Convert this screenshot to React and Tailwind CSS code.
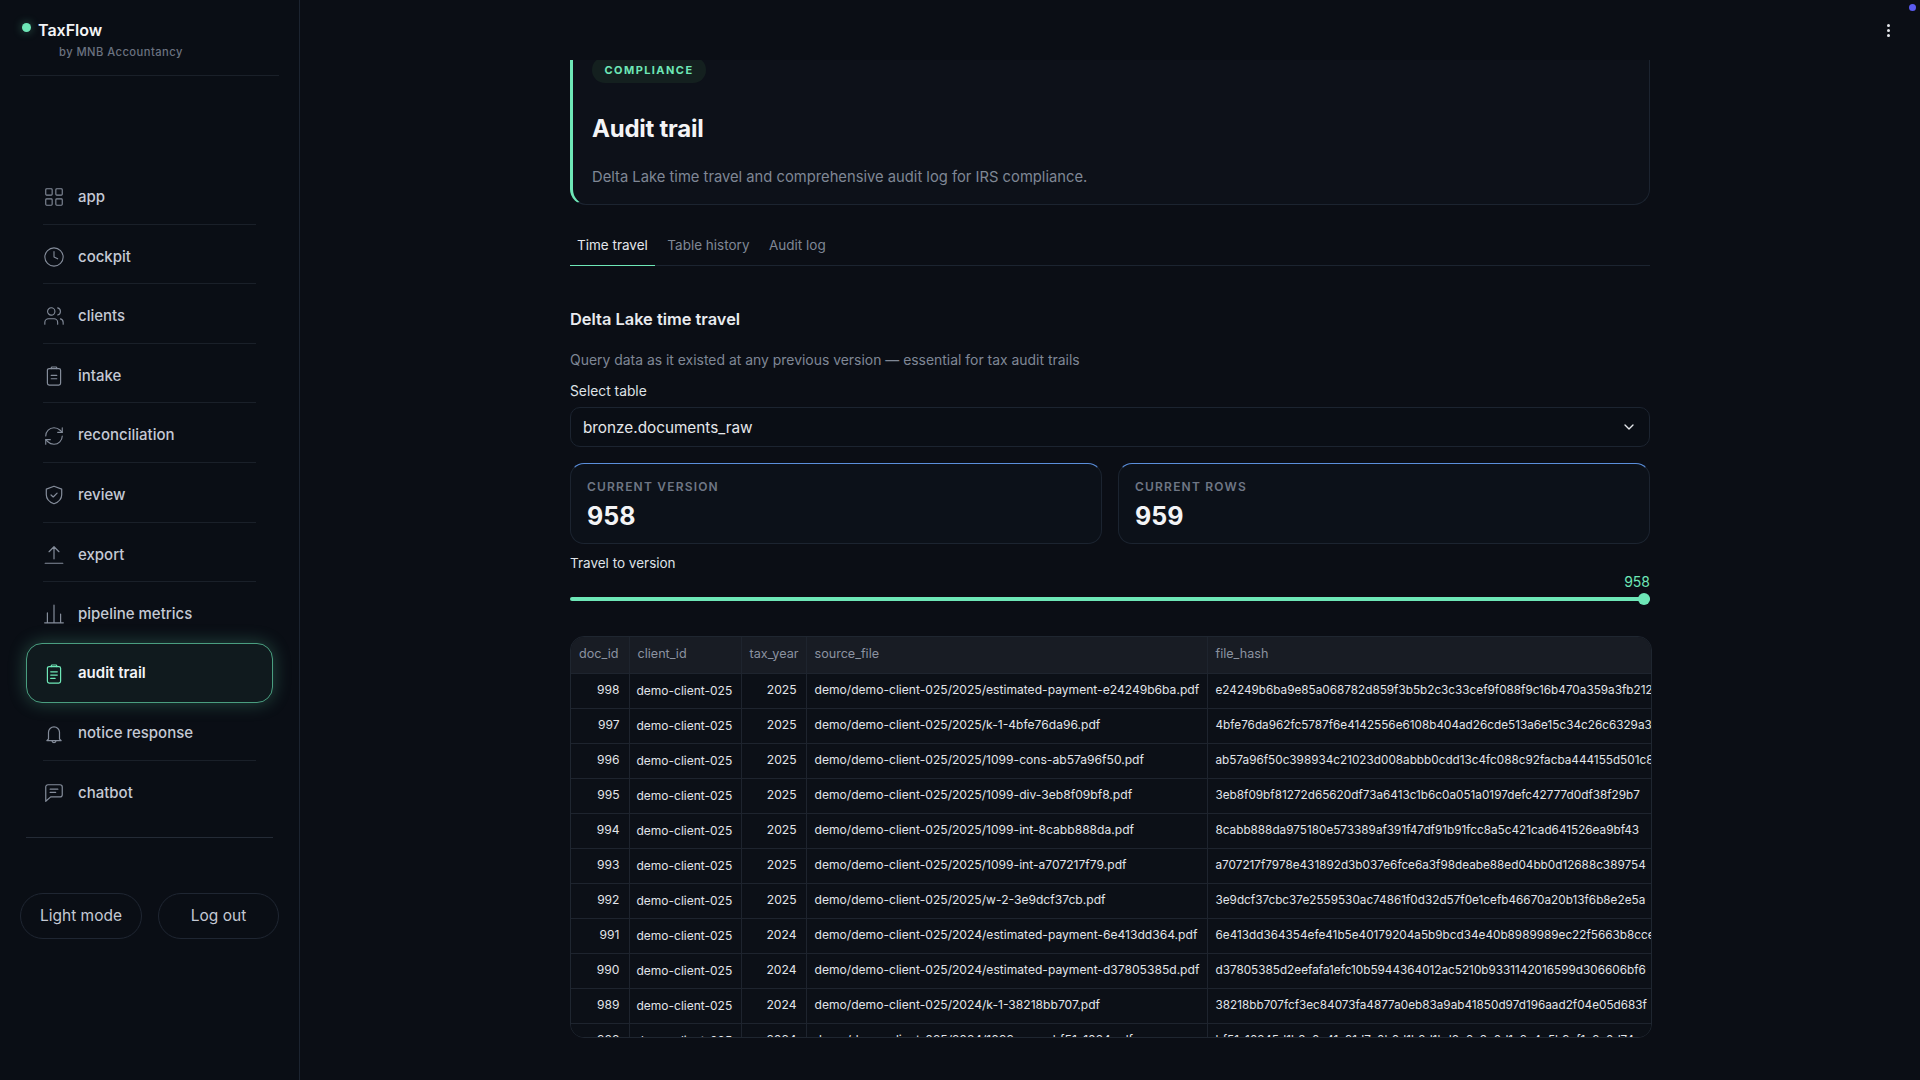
import React from "react";
import { LayoutGrid, Clock, Users, RefreshCw, ChevronDown } from "lucide-react";

const ClipLines = ({ className, lines = 2 }) => (
  <svg className={className} viewBox="0 0 20 20" fill="none" stroke="currentColor" strokeWidth="1.1" strokeLinecap="round" strokeLinejoin="round">
    <rect x="4" y="3.2" width="12" height="15" rx="1.6" />
    <path d="M7.5 3.200V2.600a.8.8 0 0 1 .8-.8h3.400a.8.8 0 0 1 .8.8v.6" />
    {lines === 2 ? <path d="M7.500 9.500h5M7.500 12.500h5" /> : <path d="M7 8h6M7 11h6M7 14h4" />}
  </svg>
);
const ShieldIcon = ({ className }) => (
  <svg className={className} viewBox="0 0 20 20" fill="none" stroke="currentColor" strokeWidth="1.1" strokeLinecap="round" strokeLinejoin="round">
    <path d="M10 2 17 4.600v5.200c0 4-2.900 6.700-7 8.200-4.100-1.500-7-4.200-7-8.200V4.600z" />
    <path d="m7.300 10 2 1.800 3.500-3.500" />
  </svg>
);
const ExportIcon = ({ className }) => (
  <svg className={className} viewBox="0 0 20 20" fill="none" stroke="currentColor" strokeWidth="1.1" strokeLinecap="round" strokeLinejoin="round">
    <path d="M10 13.500V2.500M5.500 7 10 2.500 14.500 7M2 17.500h16" />
  </svg>
);
const BarsIcon = ({ className }) => (
  <svg className={className} viewBox="0 0 20 20" fill="none" stroke="currentColor" strokeWidth="1.1" strokeLinecap="round">
    <path d="M1.500 18h17M4 18V9M10 18V2M16 18V10" />
  </svg>
);
const BellIcon = ({ className }) => (
  <svg className={className} viewBox="0 0 20 20" fill="none" stroke="currentColor" strokeWidth="1.1" strokeLinecap="round" strokeLinejoin="round">
    <path d="M5 14.500V8.500a5 5 0 0 1 10 0v6l1.500 1.500h-13zM8.200 16.500a1.900 1.900 0 0 0 3.600 0" />
  </svg>
);
const ChatIcon = ({ className }) => (
  <svg className={className} viewBox="0 0 20 20" fill="none" stroke="currentColor" strokeWidth="1.1" strokeLinecap="round" strokeLinejoin="round">
    <path d="M2.500 4.500a2 2 0 0 1 2-2h11a2 2 0 0 1 2 2v7a2 2 0 0 1-2 2H7l-4.500 4z" />
    <path d="M6.500 6.500h7M6.500 9.500h5" />
  </svg>
);

const navItems = [
  { label: "app", icon: <LayoutGrid className="w-[22px] h-[22px]" strokeWidth={1.2} /> },
  { label: "cockpit", icon: <Clock className="w-[22px] h-[22px]" strokeWidth={1.2} /> },
  { label: "clients", icon: <Users className="w-[22px] h-[22px]" strokeWidth={1.2} /> },
  { label: "intake", icon: <ClipLines className="w-[22px] h-[22px]" /> },
  { label: "reconciliation", icon: <RefreshCw className="w-[22px] h-[22px]" strokeWidth={1.2} /> },
  { label: "review", icon: <ShieldIcon className="w-[22px] h-[22px]" /> },
  { label: "export", icon: <ExportIcon className="w-[22px] h-[22px]" /> },
  { label: "pipeline metrics", icon: <BarsIcon className="w-[22px] h-[22px]" />, noLine: true },
  { label: "audit trail", icon: <ClipLines className="w-[22px] h-[22px]" lines={3} />, active: true, noLine: true },
  { label: "notice response", icon: <BellIcon className="w-[22px] h-[22px]" /> },
  { label: "chatbot", icon: <ChatIcon className="w-[22px] h-[22px]" />, noLine: true },
];

const rows = [
  ["998", "2025", "demo/demo-client-025/2025/estimated-payment-e24249b6ba.pdf", "e24249b6ba9e85a068782d859f3b5b2c3c33cef9f088f9c16b470a359a3fb212"],
  ["997", "2025", "demo/demo-client-025/2025/k-1-4bfe76da96.pdf", "4bfe76da962fc5787f6e4142556e6108b404ad26cde513a6e15c34c26c6329a3"],
  ["996", "2025", "demo/demo-client-025/2025/1099-cons-ab57a96f50.pdf", "ab57a96f50c398934c21023d008abbb0cdd13c4fc088c92facba444155d501c8"],
  ["995", "2025", "demo/demo-client-025/2025/1099-div-3eb8f09bf8.pdf", "3eb8f09bf81272d65620df73a6413c1b6c0a051a0197defc42777d0df38f29b7"],
  ["994", "2025", "demo/demo-client-025/2025/1099-int-8cabb888da.pdf", "8cabb888da975180e573389af391f47df91b91fcc8a5c421cad641526ea9bf43"],
  ["993", "2025", "demo/demo-client-025/2025/1099-int-a707217f79.pdf", "a707217f7978e431892d3b037e6fce6a3f98deabe88ed04bb0d12688c389754"],
  ["992", "2025", "demo/demo-client-025/2025/w-2-3e9dcf37cb.pdf", "3e9dcf37cbc37e2559530ac74861f0d32d57f0e1cefb46670a20b13f6b8e2e5a"],
  ["991", "2024", "demo/demo-client-025/2024/estimated-payment-6e413dd364.pdf", "6e413dd364354efe41b5e40179204a5b9bcd34e40b8989989ec22f5663b8cce1"],
  ["990", "2024", "demo/demo-client-025/2024/estimated-payment-d37805385d.pdf", "d37805385d2eefafa1efc10b5944364012ac5210b9331142016599d306606bf6"],
  ["989", "2024", "demo/demo-client-025/2024/k-1-38218bb707.pdf", "38218bb707fcf3ec84073fa4877a0eb83a9ab41850d97d196aad2f04e05d683f"],
  ["988", "2024", "demo/demo-client-025/2024/1099-cons-bf51a1024.pdf", "bf51a10245d1b3a0c41a91d7e0b0d1b2d1bd8a6c3e0d1a2a4e5b9cf1e2a0d74c"],
];

function Sidebar() {
  return (
    <aside className="w-[300px] shrink-0 h-full border-r border-[#1c2430] bg-[#0a0e15] flex flex-col">
      <div className="mx-5 h-[76px] border-b border-[#1a2029] pt-[21px]">
        <div className="flex items-start">
          <span className="w-[9px] h-[9px] rounded-full bg-[#6ee7b7] shadow-[0_0_10px_#6ee7b766] mt-[2px] ml-[2px]"></span>
          <span className="ml-[7px] text-[16px] leading-[19px] font-semibold text-[#f3f4f6]">TaxFlow</span>
        </div>
        <div className="ml-[39px] mt-[5px] text-[11.2px] leading-[14px] font-medium tracking-[0.04em] text-[#6b7280]">by MNB Accountancy</div>
      </div>
      <nav className="mt-[89px] flex flex-col">
        {navItems.map((item) => (
          <div
            key={item.label}
            className={
              item.active
                ? "mx-[26px] mt-[1.500px] -mb-[1.500px] h-[59.600px] px-[16px] flex items-center rounded-2xl border border-[#4a9e80] bg-[#101a1e] shadow-[0_0_18px_#6ee7b744]"
                : "mx-[26px] h-[59.600px] px-[17px]"
            }
          >
            <div className={`h-full flex items-center ${item.active ? "w-full pt-[1px]" : "pt-[6px] border-b"} ${item.noLine ? "border-transparent" : "border-[#1a2029]"}`}>
              <span className={item.active ? "w-[35px] flex text-[#6ee7b7]" : "w-[35px] flex text-[#848c9a]"}>{item.icon}</span>
              <span className={item.active ? "text-[15px] font-semibold text-[#f3f4f6]" : "text-[15px] font-medium text-[#c4c9d4]"}>{item.label}</span>
            </div>
          </div>
        ))}
      </nav>
      <div className="mx-[26px] mt-[16px] border-t border-[#242b36]"></div>
      <div className="mx-5 mt-[55px] flex gap-4">
        <button className="w-[122px] h-[46px] rounded-full border border-[#1f2632] text-[15.500px] text-[#c4c9d4]">Light mode</button>
        <button className="w-[121px] h-[46px] rounded-full border border-[#1f2632] text-[15.500px] text-[#c4c9d4]">Log out</button>
      </div>
    </aside>
  );
}

function MetricCard({ label, value }) {
  return (
    <div className="flex-1 h-[81px] rounded-[14px] border border-[#1c2430] border-t-[#5b8fdc] bg-[#0c1119] px-[16px] pt-[15px]">
      <div className="text-[12px] leading-[16px] font-semibold tracking-[0.1em] text-[#6f7785] uppercase">{label}</div>
      <div className="mt-[4px] text-[25px] leading-[34px] font-bold text-[#f3f4f6]">{value}</div>
    </div>
  );
}

function DataTable() {
  const cell = "border-r border-b border-[#1e242e] whitespace-nowrap overflow-hidden";
  return (
    <div className="mt-[35px] w-[1082px] h-[402px] rounded-[14px] border border-[#1f2630] overflow-hidden">
      <table className="table-fixed w-[1240px] border-collapse text-[12.100px] text-[#e2e5ea]">
        <colgroup>
          <col className="w-[58px]" />
          <col className="w-[112px]" />
          <col className="w-[65px]" />
          <col className="w-[401px]" />
          <col className="w-[604px]" />
        </colgroup>
        <thead>
          <tr className="h-[36px] bg-[#181c24] text-[#8b92a0] text-left">
            {["doc_id", "client_id", "tax_year", "source_file", "file_hash"].map((h) => (
              <th key={h} className={`${cell} px-[8px] font-normal text-[12.600px]`}>{h}</th>
            ))}
          </tr>
        </thead>
        <tbody className="bg-[#0c1017]">
          {rows.map((r) => (
            <tr key={r[0]} className="h-[35px]">
              <td className={`${cell} pr-[9px] text-right`}>{r[0]}</td>
              <td className={`${cell} pl-[7px] text-[12px]`}>demo-client-025</td>
              <td className={`${cell} pr-[9px] text-right`}>{r[1]}</td>
              <td className={`${cell} pl-[8px]`}>{r[2]}</td>
              <td className={`${cell} pl-[8px] text-[11.750px]`}>{r[3]}</td>
            </tr>
          ))}
        </tbody>
      </table>
    </div>
  );
}

export default function App() {
  return (
    <div className="w-[1920px] h-[1080px] flex overflow-hidden bg-[#0b0e15] font-['Inter',sans-serif]">
      <Sidebar />
      <main className="flex-1 h-full flex flex-col min-w-0 relative">
        <span className="absolute right-[4px] top-[4px] w-[7px] h-[7px] rounded-full bg-[#5b5bf0]"></span>
        <header className="h-[60px] shrink-0 flex items-start justify-end pr-[30px] pt-[24px]">
          <div className="flex flex-col gap-[2px]">
            <span className="w-[3px] h-[3px] rounded-full bg-[#e5e7eb]"></span>
            <span className="w-[3px] h-[3px] rounded-full bg-[#e5e7eb]"></span>
            <span className="w-[3px] h-[3px] rounded-full bg-[#e5e7eb]"></span>
          </div>
        </header>
        <div className="flex-1 overflow-hidden pl-[270px] w-[1620px]">
          <div className="w-[1080px]">
            <section className="-mt-[20px] h-[165px] rounded-b-2xl border border-t-0 border-[#1c2430] border-l-[3px] border-l-[#6ee7b7] bg-[#0d1119] pl-[19px]">
              <span className="mt-[17px] inline-flex h-[26px] w-[114px] items-center justify-center rounded-full bg-[#14201f] text-[11px] font-bold tracking-[0.13em] text-[#6ee7b7]">COMPLIANCE</span>
              <h1 className="mt-[30px] text-[24px] leading-[32px] font-bold tracking-[-0.01em] text-[#f3f4f6]">Audit trail</h1>
              <p className="mt-[21px] text-[14.750px] leading-[22px] text-[#7f8795]">Delta Lake time travel and comprehensive audit log for IRS compliance.</p>
            </section>
            <div className="mt-[21px] h-[40px] flex items-end gap-[5.500px] border-b border-[#1c2430] text-[13.500px]">
              <div className="-mb-px h-[40px] px-[7px] pb-[1px] flex items-center border-b border-[#6ee7b7] text-[#e5e7eb]">Time travel</div>
              <div className="h-[40px] px-[7px] flex items-center text-[#7f8795]">Table history</div>
              <div className="h-[40px] px-[7px] flex items-center text-[#7f8795]">Audit log</div>
            </div>
            <h2 className="mt-[41px] text-[16.400px] leading-[24px] font-semibold text-[#e9ebef]">Delta Lake time travel</h2>
            <p className="mt-[19px] text-[13.930px] leading-[20px] text-[#7f8795]">Query data as it existed at any previous version — essential for tax audit trails</p>
            <label className="block mt-[11px] text-[13.800px] leading-[20px] text-[#dfe2e7]">Select table</label>
            <div className="mt-[6px] h-[40px] rounded-[10px] border border-[#1c2430] bg-[#0a0e15] px-[12px] flex items-center justify-between text-[15.300px] text-[#e5e7eb]">
              <span className="pt-[2px]">bronze.documents_raw</span>
              <ChevronDown className="w-4 h-4 text-[#e5e7eb]" strokeWidth={2} />
            </div>
            <div className="mt-[16px] flex gap-[16px]">
              <MetricCard label="Current version" value="958" />
              <MetricCard label="Current rows" value="959" />
            </div>
            <label className="block mt-[9px] text-[13.500px] leading-[20px] text-[#dfe2e7]">Travel to version</label>
            <div className="text-right text-[14px] leading-[18px] text-[#6ee7b7]">958</div>
            <div className="relative mt-[6px] h-[4px] rounded-full bg-[#6ee7b7]">
              <span className="absolute right-0 -top-[4px] w-[12px] h-[12px] rounded-full bg-[#6ee7b7]"></span>
            </div>
            <DataTable />
          </div>
        </div>
      </main>
    </div>
  );
}
